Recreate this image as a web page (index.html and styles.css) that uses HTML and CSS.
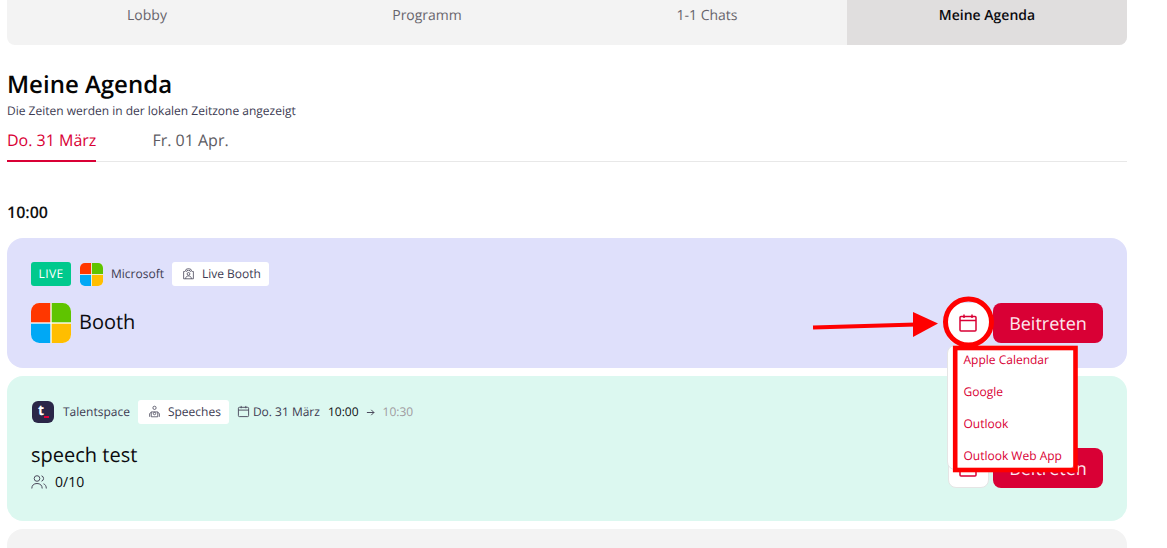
FILE: index.html
```html
<!DOCTYPE html>
<html lang="de">
<head>
<meta charset="utf-8">
<title>Meine Agenda</title>
<link rel="stylesheet" href="styles.css">
</head>
<body>
<div class="page">
  <nav class="tabs">
    <div class="tab">Lobby</div>
    <div class="tab">Programm</div>
    <div class="tab">1-1 Chats</div>
    <div class="tab active">Meine Agenda</div>
  </nav>
  <h1 class="title">Meine Agenda</h1>
  <p class="subtitle">Die Zeiten werden in der lokalen Zeitzone angezeigt</p>
  <div class="days">
    <div class="day current">Do. 31 März</div>
    <div class="day">Fr. 01 Apr.</div>
  </div>
  <div class="time">10:00</div>

  <section class="card card-booth">
    <div class="meta">
      <span class="live">LIVE</span>
      <svg class="logo-sm" viewBox="0 0 24 24"><use href="#ms"/></svg>
      <span class="org">Microsoft</span>
      <span class="chip">
        <svg class="chip-icon" viewBox="0 0 16 16" fill="none" stroke="currentColor" stroke-width="1"><path d="M3.500 5.500h-1.500v9h12v-9h-1.500"/><path d="M4 5.500a4 3.500 0 0 1 8 0"/><path d="M5.500 6a2.500 2 0 0 1 5 0"/><circle cx="8" cy="8.500" r="1.700"/><path d="M4.500 14.500c0-2.500 1.500-3.500 3.500-3.500s3.500 1 3.500 3.500"/></svg>
        Live Booth
      </span>
    </div>
    <div class="row">
      <svg class="logo-lg" viewBox="0 0 24 24">
        <defs>
          <g id="ms">
            <clipPath id="msc"><rect width="24" height="24" rx="5"/></clipPath>
            <g clip-path="url(#msc)">
              <rect width="24" height="24" fill="#fff"/>
              <rect width="11.600" height="11.600" fill="#ff3700"/>
              <rect x="12.400" width="11.600" height="11.600" fill="#5fc400"/>
              <rect y="12.400" width="11.600" height="11.600" fill="#00a8f5"/>
              <rect x="12.400" y="12.400" width="11.600" height="11.600" fill="#ffbe00"/>
            </g>
          </g>
        </defs>
        <use href="#ms"/>
      </svg>
      <h2 class="name">Booth</h2>
      <div class="actions">
        <button class="cal"><svg class="cal-icon" viewBox="0 0 20 20" fill="none" stroke="currentColor" stroke-width="1.500"><rect x="2" y="3.500" width="16" height="14.500" rx="1"/><path d="M2 7.500h16M6 1.500v3.500M14 1.500v3.500"/></svg></button>
        <button class="join">Beitreten</button>
      </div>
    </div>
  </section>

  <section class="card card-speech">
    <div class="meta">
      <span class="logo-t">t<i></i></span>
      <span class="org org-speech">Talentspace</span>
      <span class="chip">
        <svg class="chip-icon" viewBox="0 0 16 16" fill="none" stroke="currentColor" stroke-width="1"><circle cx="8" cy="3.500" r="2"/><path d="M4 14.500v-6h8v6z"/><path d="M2 14.500v-4l2-1.500M14 14.500v-4l-2-1.500"/><circle cx="8" cy="10.500" r="1.500"/></svg>
        Speeches
      </span>
      <span class="date">
        <svg class="date-icon" viewBox="0 0 14 14" fill="none" stroke="currentColor" stroke-width="1"><rect x="1.500" y="2.500" width="11" height="10" rx="1"/><path d="M1.500 5.500h11M4.500 1v2.500M9.500 1v2.500"/></svg>
        Do. 31 März
      </span>
      <span class="start">10:00</span>
      <svg class="arrow-sm" viewBox="0 0 10 10" fill="none" stroke="currentColor" stroke-width="1.100"><path d="M1 5h8M5.800 2l3 3-3 3"/></svg>
      <span class="end">10:30</span>
    </div>
    <div class="row row-speech">
      <div class="info">
        <h2 class="name">speech test</h2>
        <div class="seats">
          <svg class="seats-icon" viewBox="0 0 16 16" fill="none" stroke="currentColor" stroke-width="1"><circle cx="6" cy="4.500" r="2.800"/><path d="M.8 14.500c0-3.200 2-5 5.200-5s5.200 1.800 5.200 5"/><path d="M10.500 1.800a2.800 2.800 0 0 1 0 5.400M12.500 9.800c1.800.6 2.800 2.300 2.800 4.700"/></svg>
          <span>0/10</span>
        </div>
      </div>
      <div class="actions">
        <button class="cal cal-plain"><svg class="cal-icon" viewBox="0 0 20 20" fill="none" stroke="currentColor" stroke-width="1.500"><rect x="2" y="3.500" width="16" height="14.500" rx="1"/><path d="M2 7.500h16M6 1.500v3.500M14 1.500v3.500"/></svg></button>
        <button class="join">Beitreten</button>
      </div>
    </div>
  </section>

  <section class="card card-empty"></section>
</div>

<ul class="menu">
  <li>Apple Calendar</li>
  <li>Google</li>
  <li>Outlook</li>
  <li>Outlook Web App</li>
</ul>

<svg class="annotations" viewBox="0 0 1167 548" fill="none">
  <circle cx="968.500" cy="322" r="23" stroke="#ff0000" stroke-width="5"/>
  <rect x="955.200" y="348" width="120.300" height="122" stroke="#ff0000" stroke-width="4.600"/>
  <path d="M813 327.500L916 324.500" stroke="#ff0000" stroke-width="4"/>
  <path d="M913 312L938 323.500L913 337Z" fill="#ff0000"/>
</svg>
</body>
</html>
```
FILE: styles.css
```css
* { box-sizing: border-box; }
html, body { margin: 0; height: 548px; overflow: hidden; background: #fff; }
body { font-family: "Open Sans", "Noto Sans", sans-serif; color: #0b0b0f; position: relative; text-rendering: geometricPrecision; }
.page { width: 1120px; margin-left: 7px; }

.tabs { display: grid; grid-template-columns: repeat(4, 1fr); height: 45px; background: #f3f3f3; border-radius: 0 0 8px 8px; overflow: hidden; }
.tab { height: 45px; padding-top: 6px; text-align: center; font-size: 14px; line-height: 20px; color: #67646c; }
.tab.active { background: #e0dede; color: #0b0b0f; font-weight: 600; }

.title { margin: 23px 0 0; font-size: 24px; line-height: 33px; font-weight: 600; color: #050505; }
.subtitle { margin: 2px 0 0; font-size: 12px; line-height: 15px; color: #3c3b52; }

.days { display: flex; gap: 56px; height: 39px; margin-top: 5px; border-bottom: 1px solid #e8e8e8; }
.day { height: 39px; padding-top: 6px; font-size: 16px; line-height: 22px; color: #5d5b62; }
.day.current { color: #d90035; border-bottom: 2px solid #d90035; }

.time { margin-top: 40px; font-size: 16px; line-height: 20px; font-weight: 600; color: #111; }

.card { border-radius: 16px; padding: 24px; margin-bottom: 8px; }
.card-booth { margin-top: 16px; height: 130px; background: #dfe0fb; }
.card-speech { height: 145px; background: #dcf8f0; }
.card-empty { height: 19px; background: #f3f3f3; margin-bottom: 0; border-radius: 16px 16px 0 0; }

.meta { display: flex; align-items: center; height: 24px; font-size: 12px; color: #3c3b52; }
.live { width: 40px; height: 24px; background: #00c98d; color: #fff; border-radius: 3px; text-align: center; line-height: 24px; font-size: 12px; letter-spacing: .4px; }
.logo-sm { width: 23px; height: 23px; margin-left: 9px; }
.org { margin-left: 8px; padding-bottom: 2px; }
.org-speech { margin-left: 9px; }
.chip { display: flex; align-items: center; gap: 7px; height: 24px; margin-left: 8px; padding: 0 8px 2px 10px; background: #fff; border-radius: 3px; }
.chip-icon { width: 13px; height: 13px; color: #4b4a5c; }
.logo-t { position: relative; width: 22px; height: 22px; margin-left: 1px; border-radius: 6px; background: #2b2748; color: #fff; font-weight: 700; font-size: 14px; line-height: 20px; padding-left: 6px; }
.logo-t i { position: absolute; left: 12px; top: 15px; width: 5px; height: 2px; background: #e0003c; }
.date { display: flex; align-items: center; gap: 3px; margin-left: 8px; padding-bottom: 2px; }
.date-icon { width: 13px; height: 13px; color: #4b4a5c; }
.start { margin-left: 8px; padding-bottom: 2px; color: #0b0b0f; }
.arrow-sm { width: 9px; height: 9px; margin-left: 7px; color: #4b4a5c; }
.end { margin-left: 8px; padding-bottom: 2px; color: #a09a9f; font-weight: 500; }

.row { display: flex; align-items: center; height: 40px; margin-top: 17px; }
.logo-lg { width: 40px; height: 40px; flex: none; }
.card-booth .name { margin-left: 8px; margin-top: -3px; }
.name { margin: 0; font-size: 20px; line-height: 27px; font-weight: 400; color: #0b0b0f; }
.actions { margin-left: auto; display: flex; gap: 4px; align-items: center; }
.cal { display: flex; align-items: center; justify-content: center; width: 41px; height: 40px; padding: 0 1px 0 0; border: 0; border-radius: 8px; background: #fff; color: #d90035; }
.cal-plain { border: 1px solid #e5e5e5; }
.cal-icon { width: 20px; height: 20px; }
.join { width: 110px; height: 40px; padding: 1px 0 0; border: 0; border-radius: 8px; background: #d90035; color: #fde8ee; font: 400 18px/38px "Open Sans", "Noto Sans", sans-serif; text-rendering: geometricPrecision; }

.row-speech { align-items: flex-start; margin-top: 17px; }
.row-speech .actions { margin-top: 7px; }
.seats { display: flex; align-items: center; gap: 8px; height: 20px; margin-top: 4px; font-size: 14px; }
.seats-icon { width: 16px; height: 16px; color: #4b4a5c; }

.menu { position: absolute; left: 947px; top: 345px; width: 128px; height: 125px; margin: 0; padding: 0; list-style: none; background: #fff; border: 1px solid #e5e5e5; border-radius: 8px; }
.menu li { height: 32px; padding-left: 15.500px; font-size: 12px; line-height: 28px; color: #d90035; }
.annotations { position: absolute; left: 0; top: 0; width: 1167px; height: 548px; pointer-events: none; }
```
